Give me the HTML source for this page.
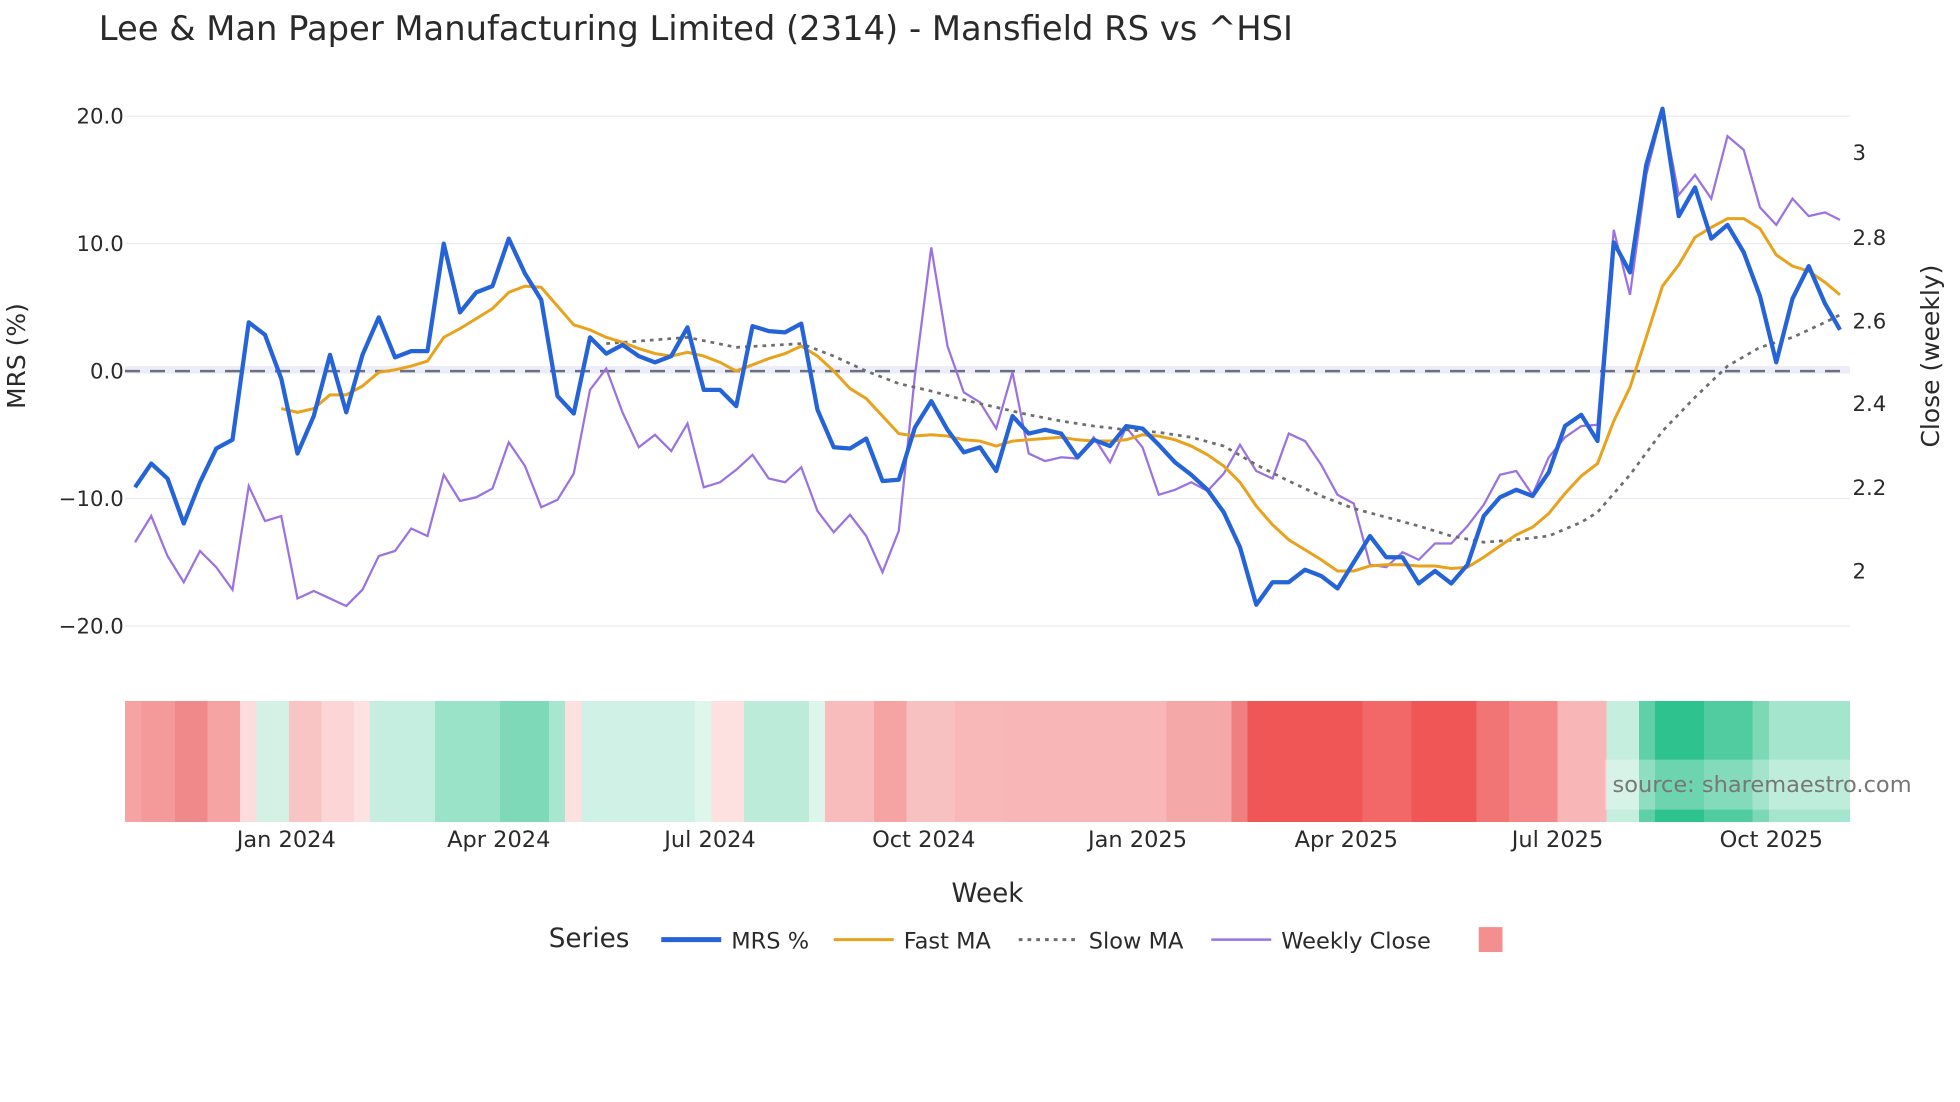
<!DOCTYPE html>
<html><head><meta charset="utf-8"><style>
html,body{margin:0;padding:0;background:#fff;width:1960px;height:1102px;overflow:hidden}
svg{display:block}
text{font-family:"DejaVu Sans","Liberation Sans",sans-serif;fill:#2a2a2a}
</style></head><body>
<svg width="1960" height="1102" viewBox="0 0 1568 882" preserveAspectRatio="none">
<text x="79" y="32" font-size="27">Lee &amp; Man Paper Manufacturing Limited (2314) - Mansfield RS vs ^HSI</text>
<g stroke="#ececf2" stroke-width="1">
<line x1="100" x2="1480" y1="93" y2="93"/><line x1="100" x2="1480" y1="195" y2="195"/>
<line x1="100" x2="1480" y1="399" y2="399"/><line x1="100" x2="1480" y1="501" y2="501"/>
</g>
<rect x="100" y="293" width="1380" height="6" fill="#ededfa"/>
<line x1="100" x2="1480" y1="297" y2="297" stroke="#6b7080" stroke-width="2" stroke-dasharray="12,8"/>
<g font-size="17" text-anchor="end">
<text x="99" y="99">20.0</text><text x="99" y="201">10.0</text><text x="99" y="303">0.0</text>
<text x="99" y="405">−10.0</text><text x="99" y="507">−20.0</text>
</g>
<g font-size="17">
<text x="1482" y="128">3</text><text x="1482" y="196">2.8</text><text x="1482" y="263">2.6</text>
<text x="1482" y="329">2.4</text><text x="1482" y="396">2.2</text><text x="1482" y="463">2</text>
</g>
<text transform="translate(20,285) rotate(-90)" font-size="20" text-anchor="middle">MRS (%)</text>
<text transform="translate(1551,285) rotate(-90)" font-size="20" text-anchor="middle">Close (weekly)</text>

<polyline fill="none" stroke="#9b72e0" stroke-width="1.8" points="108,434 121,413 134,445 147,466 160,441 173,454 186,472 199,389 212,417 225,413 238,479 251,473 264,479 277,485 290,472 303,445 316,441 329,423 342,429 355,380 368,401 381,398 394,391 407,354 420,373 433,406 446,400 459,379 472,312 485,295 498,330 511,358 524,348 537,361 550,339 563,390 576,386 589,376 602,364 615,383 628,386 641,374 654,409 667,426 680,412 693,429 706,458 719,425 732,300 745,198 758,277 771,314 784,322 797,343 810,298 823,363 836,369 849,366 862,367 875,350 888,370 901,342 914,358 927,396 940,392 953,386 966,393 979,379 992,356 1005,377 1018,383 1031,347 1044,353 1057,372 1070,396 1083,403 1096,452 1109,454 1122,442 1135,448 1148,435 1161,435 1174,421 1187,404 1200,380 1213,377 1226,396 1239,366 1252,350 1265,341 1278,340 1291,184 1304,236 1317,140 1330,88 1343,156 1356,140 1369,159 1382,109 1395,120 1408,166 1421,180 1434,159 1447,173 1460,170 1472,176"/>
<polyline fill="none" stroke="#6e6e6e" stroke-width="2.2" stroke-dasharray="3,4" points="485,275 511,273 550,270 589,278 641,275 667,285 693,297 719,307 745,313 771,320 797,326 823,332 849,337 875,341 901,344 927,346 953,350 979,357 1005,372 1031,385 1057,397 1083,407 1109,414 1135,421 1161,429 1187,434 1213,432 1239,429 1265,418 1278,410 1304,380 1330,345 1356,318 1382,293 1408,278 1434,270 1460,258 1472,252"/>
<polyline fill="none" stroke="#e8a21c" stroke-width="2.4" points="225,327 238,330 251,327 264,316 277,316 290,309 303,298 316,296 329,293 342,289 355,270 368,263 381,255 394,247 407,234 420,229 433,230 446,245 459,260 472,264 485,270 498,274 511,279 524,283 537,285 550,282 563,285 576,290 589,297 602,292 615,287 628,283 641,277 654,285 667,297 680,311 693,319 706,333 719,347 732,349 745,348 758,349 771,352 784,353 797,357 810,353 823,352 836,351 849,350 862,352 875,353 888,353 901,352 914,348 927,349 940,352 953,357 966,364 979,373 992,386 1005,405 1018,420 1031,432 1044,440 1057,448 1070,457 1083,457 1096,453 1109,452 1122,452 1135,453 1148,453 1161,455 1174,454 1187,446 1200,437 1213,428 1226,422 1239,411 1252,395 1265,381 1278,371 1291,337 1304,310 1317,270 1330,229 1343,212 1356,190 1369,182 1382,175 1395,175 1408,183 1421,204 1434,213 1447,217 1460,226 1472,236"/>
<polyline fill="none" stroke="#2563d9" stroke-width="3.4" stroke-linejoin="round" points="108,390 121,371 134,383 147,419 160,386 173,359 186,352 199,258 212,268 225,303 238,363 251,333 264,284 277,330 290,284 303,254 316,286 329,281 342,281 355,195 368,250 381,234 394,229 407,191 420,219 433,240 446,317 459,331 472,270 485,283 498,276 511,285 524,290 537,285 550,262 563,312 576,312 589,325 602,261 615,265 628,266 641,259 654,328 667,358 680,359 693,351 706,385 719,384 732,342 745,321 758,344 771,362 784,358 797,377 810,333 823,347 836,344 849,347 862,366 875,352 888,357 901,341 914,343 927,356 940,370 953,380 966,392 979,410 992,438 1005,484 1018,466 1031,466 1044,456 1057,461 1070,471 1083,450 1096,429 1109,446 1122,446 1135,467 1148,457 1161,467 1174,452 1187,413 1200,398 1213,392 1226,397 1239,378 1252,341 1265,332 1278,353 1291,194 1304,218 1317,132 1330,87 1343,173 1356,150 1369,191 1382,180 1395,202 1408,237 1421,290 1434,239 1447,213 1460,243 1472,264"/>

<g shape-rendering="crispEdges">
<rect x="100" y="561" width="13" height="97" fill="#f5a3a3"/><rect x="113" y="561" width="27" height="97" fill="#f49a9a"/>
<rect x="140" y="561" width="26" height="97" fill="#f08a8a"/><rect x="166" y="561" width="26" height="97" fill="#f5a3a3"/>
<rect x="192" y="561" width="13" height="97" fill="#fcdcdc"/><rect x="205" y="561" width="26" height="97" fill="#d4f1e6"/>
<rect x="231" y="561" width="26" height="97" fill="#f9c4c4"/><rect x="257" y="561" width="26" height="97" fill="#fcd6d6"/>
<rect x="283" y="561" width="13" height="97" fill="#fde2e2"/><rect x="296" y="561" width="52" height="97" fill="#c6eee0"/>
<rect x="348" y="561" width="52" height="97" fill="#9ae3c9"/><rect x="400" y="561" width="39" height="97" fill="#7ed9b8"/>
<rect x="439" y="561" width="13" height="97" fill="#a8e6cf"/><rect x="452" y="561" width="13" height="97" fill="#fde0e0"/>
<rect x="465" y="561" width="91" height="97" fill="#d0f1e5"/><rect x="556" y="561" width="13" height="97" fill="#dff6ec"/>
<rect x="569" y="561" width="26" height="97" fill="#fde0e0"/><rect x="595" y="561" width="52" height="97" fill="#bdebda"/>
<rect x="647" y="561" width="13" height="97" fill="#ddf5eb"/><rect x="660" y="561" width="39" height="97" fill="#f8bcbc"/>
<rect x="699" y="561" width="26" height="97" fill="#f5a3a3"/><rect x="725" y="561" width="39" height="97" fill="#f8c1c1"/>
<rect x="764" y="561" width="39" height="97" fill="#f8b8b8"/><rect x="803" y="561" width="130" height="97" fill="#f8b6b6"/>
<rect x="933" y="561" width="52" height="97" fill="#f5a8a8"/><rect x="985" y="561" width="13" height="97" fill="#f08080"/>
<rect x="998" y="561" width="92" height="97" fill="#f05656"/><rect x="1090" y="561" width="39" height="97" fill="#f26868"/>
<rect x="1129" y="561" width="52" height="97" fill="#f05656"/><rect x="1181" y="561" width="26" height="97" fill="#f27575"/>
<rect x="1207" y="561" width="39" height="97" fill="#f48888"/><rect x="1246" y="561" width="39" height="97" fill="#f8b6b6"/>
<rect x="1285" y="561" width="26" height="97" fill="#c6eedf"/><rect x="1311" y="561" width="13" height="97" fill="#5fd0a8"/>
<rect x="1324" y="561" width="39" height="97" fill="#2ec28e"/><rect x="1363" y="561" width="39" height="97" fill="#50cca0"/>
<rect x="1402" y="561" width="13" height="97" fill="#7dd8b6"/><rect x="1415" y="561" width="65" height="97" fill="#a4e5cd"/>
</g>
<rect x="1284" y="608" width="196" height="40" fill="#fff" fill-opacity="0.3"/>
<text x="1290" y="634" font-size="18" style="fill:#777">source: sharemaestro.com</text>

<g font-size="18" text-anchor="middle">
<text x="229" y="678">Jan 2024</text><text x="399" y="678">Apr 2024</text><text x="568" y="678">Jul 2024</text>
<text x="739" y="678">Oct 2024</text><text x="910" y="678">Jan 2025</text><text x="1077" y="678">Apr 2025</text>
<text x="1246" y="678">Jul 2025</text><text x="1417" y="678">Oct 2025</text>
</g>
<text x="790" y="722" font-size="21" text-anchor="middle">Week</text>
<text x="439" y="758" font-size="21">Series</text>
<line x1="529" x2="577" y1="752" y2="752" stroke="#2563d9" stroke-width="4"/>
<text x="585" y="759" font-size="18">MRS %</text>
<line x1="667" x2="715" y1="752" y2="752" stroke="#e8a21c" stroke-width="2.4"/>
<text x="723" y="759" font-size="18">Fast MA</text>
<line x1="815" x2="863" y1="752" y2="752" stroke="#6e6e6e" stroke-width="2.4" stroke-dasharray="3,4"/>
<text x="871" y="759" font-size="18">Slow MA</text>
<line x1="969" x2="1017" y1="752" y2="752" stroke="#9b72e0" stroke-width="2"/>
<text x="1025" y="759" font-size="18">Weekly Close</text>
<rect x="1183" y="742" width="19" height="20" fill="#f48f8f"/>
</svg>
</body></html>
